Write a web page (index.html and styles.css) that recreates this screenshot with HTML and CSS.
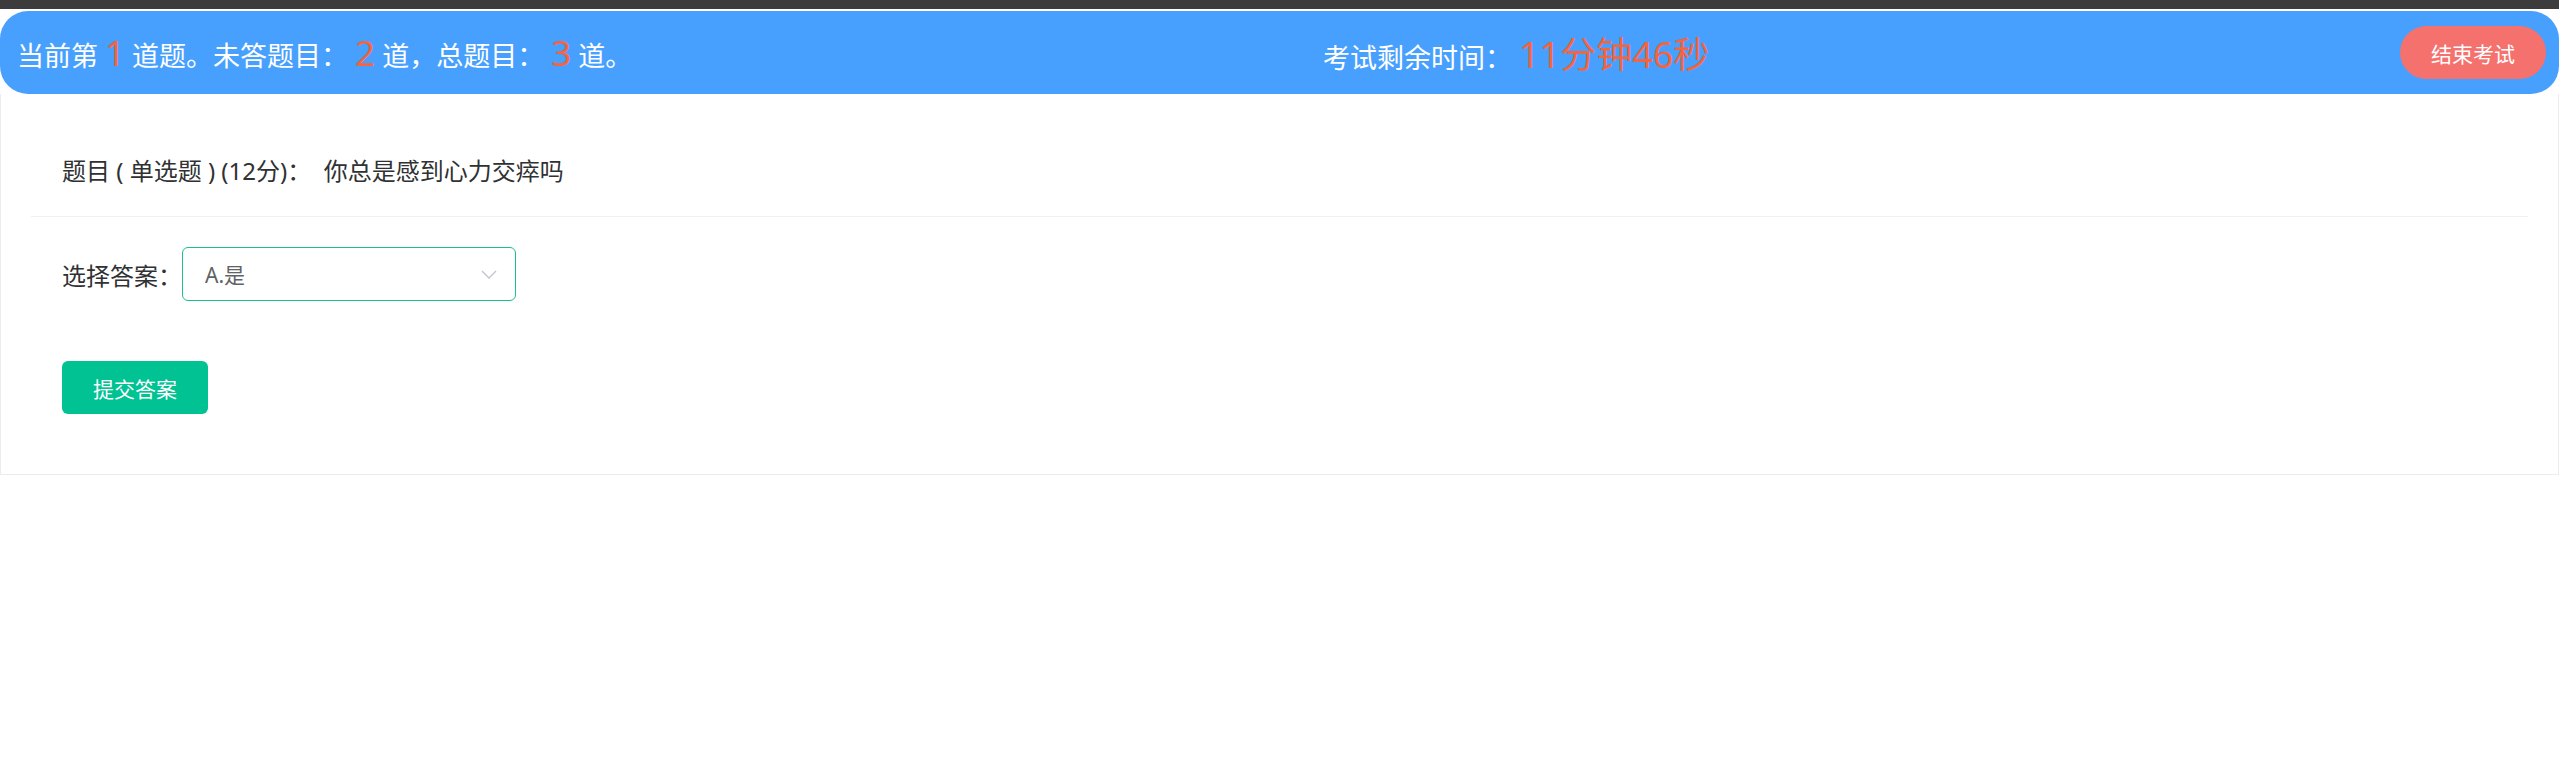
FILE: index.html
```html
<!DOCTYPE html>
<html lang="zh-CN">
<head>
    <meta charset="UTF-8">
    <meta name="viewport" content="width=device-width, initial-scale=1.0">
    <title>在线考试</title>
    <link rel="stylesheet" href="styles.css">
</head>
<body>

    <div class="topbar"></div>

    <div class="exam-header">
        <div class="progress">
            当前第 <span class="num">1</span> 道题。未答题目： <span class="num">2</span> 道，总题目： <span class="num">3</span> 道。
        </div>
        <div class="timer">
            考试剩余时间： <span class="num time">11分钟46秒</span>
        </div>
        <button class="end-btn">结束考试</button>
    </div>

    <div class="exam-card">
        <div class="question">题目 ( 单选题 ) (12分)：&nbsp;&nbsp;你总是感到心力交瘁吗</div>

        <div class="answer-row">
            <span class="answer-label">选择答案：</span>
            <div class="select">
                <span>A.是</span>
                <svg width="16" height="9" viewBox="0 0 16 9">
                    <polyline points="1,1 8,8 15,1" fill="none" stroke="#c0c4cc" stroke-width="1.3"/>
                </svg>
            </div>
        </div>

        <button class="submit-btn">提交答案</button>
    </div>

</body>
</html>
```

FILE: styles.css
```css
body {
    margin: 0;
    font-family: "Noto Sans", "Noto Sans CJK SC", sans-serif;
    background: #fff;
    color: #303133;
}

.topbar {
    height: 9px;
    background: #3c3c3c;
}

.exam-header {
    margin-top: 2px;
    height: 83px;
    padding: 0 13px 0 17px;
    background: #48a0fe;
    border-radius: 28px;
    display: flex;
    align-items: center;
    justify-content: space-between;
    color: #fff;
    font-size: 27px;
    white-space: nowrap;
}

.num {
    color: #f5633f;
    font-size: 35px;
}

.time {
    font-size: 36px;
}

.end-btn {
    width: 146px;
    height: 53px;
    border: none;
    border-radius: 27px;
    background: #f4716e;
    color: #fff;
    font-family: inherit;
    font-size: 21px;
    cursor: pointer;
}

.exam-card {
    border: 1px solid #ececec;
    border-top: none;
    padding: 0 30px 60px;
}

.question {
    padding: 59px 0 27px 31px;
    line-height: 36px;
    font-size: 24px;
    border-bottom: 1px solid #eff0f2;
}

.answer-row {
    display: flex;
    align-items: center;
    margin: 30px 0 0 31px;
}

.answer-label {
    font-size: 24px;
}

.select {
    width: 334px;
    height: 54px;
    box-sizing: border-box;
    padding: 0 18px 0 22px;
    border: 1px solid #1cc08f;
    border-radius: 6px;
    display: flex;
    align-items: center;
    justify-content: space-between;
    font-size: 21px;
    color: #606266;
}

.submit-btn {
    margin: 60px 0 0 31px;
    width: 146px;
    height: 53px;
    border: none;
    border-radius: 6px;
    background: #00c292;
    color: #fff;
    font-family: inherit;
    font-size: 21px;
    cursor: pointer;
}
```
